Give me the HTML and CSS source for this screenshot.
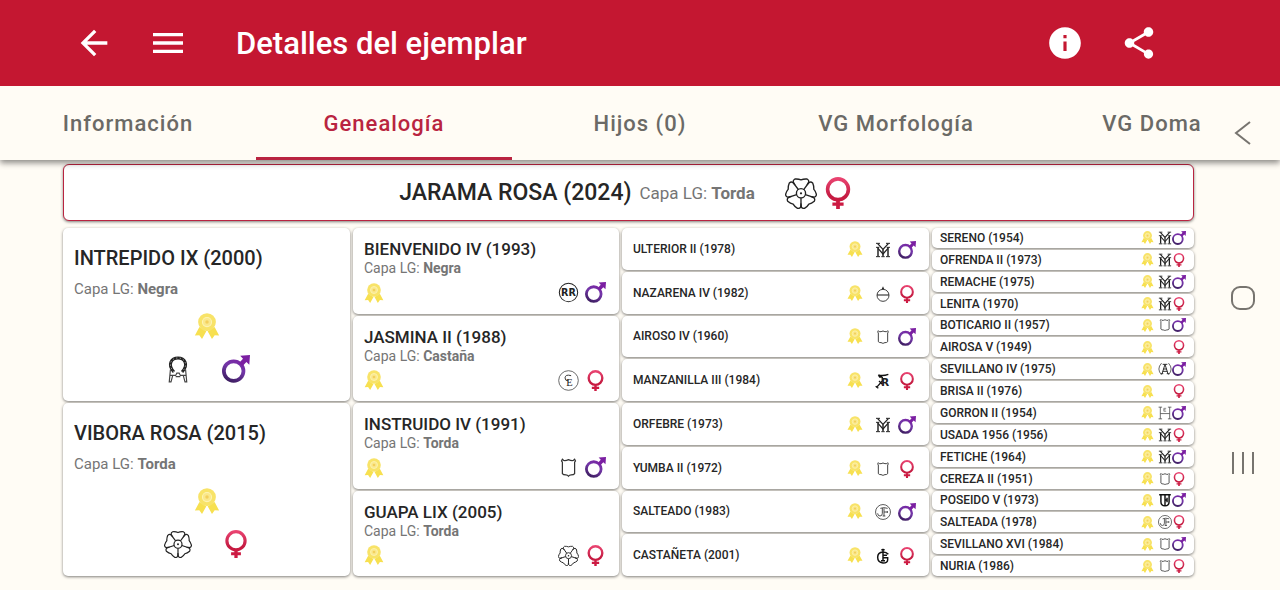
FILE: index.html
```html
<!DOCTYPE html>
<html lang="es">
<head>
  <meta charset="UTF-8">
  <meta name="viewport" content="width=device-width, initial-scale=1.0">
  <title>Detalles del ejemplar</title>
  <link rel="stylesheet" href="styles.css">
</head>
<body>

<!-- Iconos compartidos -->
<svg class="sprite" aria-hidden="true">
  <defs>
    <linearGradient id="maleFill" gradientUnits="userSpaceOnUse" x1="18" y1="1" x2="8" y2="24">
      <stop offset="0" stop-color="#7b1fa2"/>
      <stop offset="0.5" stop-color="#7336a8"/>
      <stop offset="1" stop-color="#3b1d5e"/>
    </linearGradient>
    <linearGradient id="femaleFill" gradientUnits="userSpaceOnUse" x1="12" y1="0" x2="12" y2="24">
      <stop offset="0" stop-color="#ec4674"/>
      <stop offset="0.6" stop-color="#c41c42"/>
      <stop offset="1" stop-color="#d8143c"/>
    </linearGradient>
    <path id="petal" d="M2.2 -3L4.8 -6.600L6.300 -9.200Q6.500 -10.600 4.900 -11.500Q2 -11.700 0 -10.800Q-2 -11.700 -4.900 -11.500Q-6.500 -10.600 -6.300 -9.200L-4.800 -6.600"/>
  </defs>

  <symbol id="male" viewBox="0 0 24 24">
    <circle cx="10" cy="13.8" r="8.4" fill="none" stroke="url(#maleFill)" stroke-width="3.2"/>
    <path d="M15.6 0.6L24 0l-0.6 8.4-2.5-2.3-3.4 3.6-2.9-2.9 3.4-3.6z" fill="#7b1fa2"/>
  </symbol>
  <symbol id="female" viewBox="0 0 24 24">
    <circle cx="12" cy="9.2" r="7.8" fill="none" stroke="url(#femaleFill)" stroke-width="2.7"/>
    <path d="M10.6 17.6h2.8v1.5h2.8v2.5h-2.8V24h-2.8v-2.4H7.8v-2.5h2.8z" fill="#cc1a42"/>
  </symbol>
  <symbol id="ribbon" viewBox="0 0 24 24">
    <path d="M5 13L0.8 20.8l4.1-.3L7.4 24l4-7.2zM19 13l4.2 7.8-4.1-.3-2.5 3.5-4-7.2z" fill="#f7e050"/>
    <circle cx="12" cy="8.4" r="8.2" fill="#f8e368"/>
    <circle cx="12" cy="8.4" r="4.2" fill="#fae88c" stroke="#fdf3b4" stroke-width="1"/>
    <circle cx="12" cy="8.4" r="1.6" fill="#f3cf5c"/>
  </symbol>
  <symbol id="rose" viewBox="0 0 24 24">
    <g fill="none" stroke="#222" stroke-width="1.100" transform="translate(12 12.2) scale(0.93)">
      <circle r="3.700"/>
      <use href="#petal"/>
      <use href="#petal" transform="rotate(72)"/>
      <use href="#petal" transform="rotate(144)"/>
      <use href="#petal" transform="rotate(216)"/>
      <use href="#petal" transform="rotate(288)"/>
      <circle r="0.9" fill="#222" stroke="none"/>
    </g>
  </symbol>
  <symbol id="horseshoe" viewBox="0 0 24 24">
    <path d="M8.500 14.500C2.500 8 6.500 2.500 12 2.500s9.500 5.500 3.500 12" fill="none" stroke="#222" stroke-width="2.600"/>
    <path d="M8.500 14.500C2.500 8 6.500 2.500 12 2.500s9.500 5.500 3.500 12" fill="none" stroke="#aaa" stroke-width="0.700" stroke-dasharray="1.200 1.800"/>
    <path d="M5.500 12.500L4.500 23H6l1.500-5.500M18.500 12.500l1 10.500H18l-1.500-5.500M5.500 17.500h4.500l1-2h2l1 2h4.500M10 18.500h4" fill="none" stroke="#444" stroke-width="1"/>
  </symbol>
  <symbol id="shield" viewBox="0 0 24 24">
    <path d="M5 2.500l1.500 1.500Q9 4.500 12 3q3 1.500 5.500 1L19 2.500l1 2-1 1.500v13q-1 1.500-4 1.500-2 0-3 1.500-1-1.500-3-1.500-3 0-4-1.500V6L4 4.500z" fill="none" stroke="#333" stroke-width="1.400"/>
  </symbol>
  <symbol id="brand-ym" viewBox="0 0 24 24">
    <g fill="none" stroke="#222">
      <path d="M4.500 8V21.500M19.500 8V21.500M12 11v10" stroke-width="2.200"/>
      <path d="M4.500 9.500L12 18l7.500-8.500" stroke-width="1.800"/>
      <path d="M4 2.500l8 8.500 8-8.500" stroke-width="2"/>
      <path d="M1.500 2h6M16.500 2h6M1.500 8h5M17.500 8h5M1.500 22h6M16.500 22h6M9.500 22h5" stroke-width="1.500"/>
    </g>
  </symbol>
  <symbol id="brand-orb" viewBox="0 0 24 24">
    <path d="M12 0.500l2 4.500h-4z" fill="#222"/>
    <circle cx="12" cy="14" r="9" fill="none" stroke="#333" stroke-width="1.400"/>
    <path d="M3 13.500h18" stroke="#222" stroke-width="1.600"/>
  </symbol>
  <symbol id="brand-jf" viewBox="0 0 24 24">
    <circle cx="12" cy="12" r="11.200" fill="none" stroke="#333" stroke-width="1.200"/>
    <path d="M4 14q0 4 3.500 4t3.500-4V6M8 6.500q5-2 11 0M13.500 6.500V18M13.500 12h5M18.500 10.500v3M11.500 18h4" fill="none" stroke="#333" stroke-width="1.300"/>
  </symbol>
  <symbol id="brand-cg" viewBox="0 0 24 24">
    <path d="M20 9.500Q17 6 12 6q-8 .5-8 8t8 8.500q7 0 7-5v-3h-7M12 1v18M9.500 2.500h5M12 11h6M9 19h6" fill="none" stroke="#111" stroke-width="2.200"/>
  </symbol>
  <symbol id="brand-a" viewBox="0 0 24 24">
    <path d="M6 2Q-3 12 6 22M18 2q9 10 0 20" fill="none" stroke="#333" stroke-width="1.300"/>
    <path d="M8 4h8M12 4L7 20M12 4l5 16M9 12h6M8 16h8M5 20h4M15 20h4" fill="none" stroke="#222" stroke-width="1.600"/>
  </symbol>
  <symbol id="brand-h" viewBox="0 0 24 24">
    <path d="M4 2v20M20 2v20M4 13h16M1 2h6M17 2h6M1 22h6M17 22h6" fill="none" stroke="#444" stroke-width="1.300"/>
    <path d="M14 4h-4v5h4M10 6.500h3" fill="none" stroke="#555" stroke-width="1.100"/>
  </symbol>
  <symbol id="brand-ut" viewBox="0 0 24 24">
    <path d="M2 3h20M5 3v12q0 7 7 7t7-7V3M12 3v19M15.500 8v8M12 12h4" fill="none" stroke="#111" stroke-width="2.500"/>
  </symbol>
</svg>

<header class="app-header">
  <div class="toolbar">
    <button class="icon-btn" aria-label="Volver">
      <svg viewBox="0 0 24 24"><path d="M20 11H7.830l5.590-5.590L12 4l-8 8 8 8 1.410-1.410L7.830 13H20z"/></svg>
    </button>
    <button class="icon-btn menu-btn" aria-label="Menú">
      <svg viewBox="0 0 24 24"><path d="M3 18h18v-2H3zM3 13h18v-2H3zM3 6v2h18V6z"/></svg>
    </button>
    <h1>Detalles del ejemplar</h1>
    <button class="icon-btn small" aria-label="Ayuda">
      <svg viewBox="0 0 24 24"><path d="M12 2C6.480 2 2 6.480 2 12s4.480 10 10 10 10-4.480 10-10S17.520 2 12 2zm1 15h-2v-6h2zm0-8h-2V7h2z"/></svg>
    </button>
    <button class="icon-btn small share-btn" aria-label="Compartir">
      <svg viewBox="0 0 24 24"><path d="M18 16.080c-.76 0-1.440.3-1.960.77L8.910 12.700c.05-.23.09-.46.09-.7s-.04-.47-.09-.7l7.050-4.110c.54.5 1.250.81 2.040.81 1.660 0 3-1.340 3-3s-1.340-3-3-3-3 1.340-3 3c0 .24.04.47.09.7L8.040 9.810C7.500 9.310 6.790 9 6 9c-1.660 0-3 1.340-3 3s1.340 3 3 3c.79 0 1.500-.31 2.040-.81l7.120 4.160c-.05.21-.08.43-.08.65 0 1.610 1.310 2.920 2.920 2.920s2.920-1.310 2.920-2.920-1.310-2.920-2.920-2.920z"/></svg>
    </button>
  </div>
  <nav class="tabs">
    <button class="tab">Información</button>
    <button class="tab active">Genealogía</button>
    <button class="tab">Hijos (0)</button>
    <button class="tab">VG Morfología</button>
    <button class="tab">VG Doma</button>
  </nav>
</header>

<main class="content">
  <article class="card root">
    <h2>JARAMA ROSA (2024)</h2>
    <p>Capa LG: <b>Torda</b></p>
    <div class="icons">
      <svg><use href="#rose"/></svg>
      <svg><use href="#female"/></svg>
    </div>
  </article>

  <div class="tree">
    <!-- Padres -->
    <section class="gen gen1">
      <article class="card">
        <h3>INTREPIDO IX (2000)</h3>
        <p>Capa LG: <b>Negra</b></p>
        <svg class="ribbon"><use href="#ribbon"/></svg>
        <div class="icons"><svg><use href="#horseshoe"/></svg><svg><use href="#male"/></svg></div>
      </article>
      <article class="card">
        <h3>VIBORA ROSA (2015)</h3>
        <p>Capa LG: <b>Torda</b></p>
        <svg class="ribbon"><use href="#ribbon"/></svg>
        <div class="icons"><svg><use href="#rose"/></svg><svg><use href="#female"/></svg></div>
      </article>
    </section>

    <!-- Abuelos -->
    <section class="gen gen2">
      <article class="card">
        <h3>BIENVENIDO IV (1993)</h3>
        <p>Capa LG: <b>Negra</b></p>
        <div class="icons">
          <svg class="ribbon"><use href="#ribbon"/></svg>
          <svg viewBox="0 0 24 24">
            <circle cx="12" cy="12" r="10.500" fill="none" stroke="#222" stroke-width="1.200"/>
            <text class="mark mark-bold" x="12" y="16" text-anchor="middle" font-size="11">RR</text>
          </svg>
          <svg><use href="#male"/></svg>
        </div>
      </article>
      <article class="card">
        <h3>JASMINA II (1988)</h3>
        <p>Capa LG: <b>Castaña</b></p>
        <div class="icons">
          <svg class="ribbon"><use href="#ribbon"/></svg>
          <svg viewBox="0 0 24 24">
            <circle cx="12" cy="12" r="11.200" fill="none" stroke="#444" stroke-width="0.900"/>
            <path d="M15 6.500Q8.500 4.500 8 9q0 3.500 4 3.500" fill="none" stroke="#333" stroke-width="1.100"/>
            <text class="mark" x="13" y="18" text-anchor="middle" font-size="12">E</text>
          </svg>
          <svg><use href="#female"/></svg>
        </div>
      </article>
      <article class="card">
        <h3>INSTRUIDO IV (1991)</h3>
        <p>Capa LG: <b>Torda</b></p>
        <div class="icons"><svg class="ribbon"><use href="#ribbon"/></svg><svg><use href="#shield"/></svg><svg><use href="#male"/></svg></div>
      </article>
      <article class="card">
        <h3>GUAPA LIX (2005)</h3>
        <p>Capa LG: <b>Torda</b></p>
        <div class="icons"><svg class="ribbon"><use href="#ribbon"/></svg><svg><use href="#rose"/></svg><svg><use href="#female"/></svg></div>
      </article>
    </section>

    <!-- Bisabuelos -->
    <section class="gen gen3">
      <article class="card">
        <h3>ULTERIOR II (1978)</h3>
        <svg class="ribbon"><use href="#ribbon"/></svg><svg class="brand"><use href="#brand-ym"/></svg><svg class="sex"><use href="#male"/></svg>
      </article>
      <article class="card">
        <h3>NAZARENA IV (1982)</h3>
        <svg class="ribbon"><use href="#ribbon"/></svg><svg class="brand"><use href="#brand-orb"/></svg><svg class="sex"><use href="#female"/></svg>
      </article>
      <article class="card">
        <h3>AIROSO IV (1960)</h3>
        <svg class="ribbon"><use href="#ribbon"/></svg><svg class="brand"><use href="#shield"/></svg><svg class="sex"><use href="#male"/></svg>
      </article>
      <article class="card">
        <h3>MANZANILLA III (1984)</h3>
        <svg class="ribbon"><use href="#ribbon"/></svg>
        <svg class="brand" viewBox="0 0 24 24">
          <path d="M5 3q7 2 15-1M5 3l2 3h4M11 6v6M11 12L2 22M1 20l4 3M6 12l5 5" fill="none" stroke="#111" stroke-width="2"/>
          <text class="mark mark-bold" x="15" y="19" text-anchor="middle" font-size="16">R</text>
        </svg>
        <svg class="sex"><use href="#female"/></svg>
      </article>
      <article class="card">
        <h3>ORFEBRE (1973)</h3>
        <svg class="ribbon"><use href="#ribbon"/></svg><svg class="brand"><use href="#brand-ym"/></svg><svg class="sex"><use href="#male"/></svg>
      </article>
      <article class="card">
        <h3>YUMBA II (1972)</h3>
        <svg class="ribbon"><use href="#ribbon"/></svg><svg class="brand"><use href="#shield"/></svg><svg class="sex"><use href="#female"/></svg>
      </article>
      <article class="card">
        <h3>SALTEADO (1983)</h3>
        <svg class="ribbon"><use href="#ribbon"/></svg><svg class="brand"><use href="#brand-jf"/></svg><svg class="sex"><use href="#male"/></svg>
      </article>
      <article class="card">
        <h3>CASTAÑETA (2001)</h3>
        <svg class="ribbon"><use href="#ribbon"/></svg><svg class="brand"><use href="#brand-cg"/></svg><svg class="sex"><use href="#female"/></svg>
      </article>
    </section>

    <!-- Tatarabuelos -->
    <section class="gen gen4">
      <article class="card">
        <h3>SERENO (1954)</h3>
        <svg class="ribbon"><use href="#ribbon"/></svg><svg class="brand"><use href="#brand-ym"/></svg><svg class="sex"><use href="#male"/></svg>
      </article>
      <article class="card">
        <h3>OFRENDA II (1973)</h3>
        <svg class="ribbon"><use href="#ribbon"/></svg><svg class="brand"><use href="#brand-ym"/></svg><svg class="sex"><use href="#female"/></svg>
      </article>
      <article class="card">
        <h3>REMACHE (1975)</h3>
        <svg class="ribbon"><use href="#ribbon"/></svg><svg class="brand"><use href="#brand-ym"/></svg><svg class="sex"><use href="#male"/></svg>
      </article>
      <article class="card">
        <h3>LENITA (1970)</h3>
        <svg class="ribbon"><use href="#ribbon"/></svg><svg class="brand"><use href="#brand-ym"/></svg><svg class="sex"><use href="#female"/></svg>
      </article>
      <article class="card">
        <h3>BOTICARIO II (1957)</h3>
        <svg class="ribbon"><use href="#ribbon"/></svg><svg class="brand"><use href="#shield"/></svg><svg class="sex"><use href="#male"/></svg>
      </article>
      <article class="card">
        <h3>AIROSA V (1949)</h3>
        <svg class="ribbon"><use href="#ribbon"/></svg><svg class="brand"></svg><svg class="sex"><use href="#female"/></svg>
      </article>
      <article class="card">
        <h3>SEVILLANO IV (1975)</h3>
        <svg class="ribbon"><use href="#ribbon"/></svg><svg class="brand"><use href="#brand-a"/></svg><svg class="sex"><use href="#male"/></svg>
      </article>
      <article class="card">
        <h3>BRISA II (1976)</h3>
        <svg class="ribbon"><use href="#ribbon"/></svg><svg class="brand"></svg><svg class="sex"><use href="#female"/></svg>
      </article>
      <article class="card">
        <h3>GORRON II (1954)</h3>
        <svg class="ribbon"><use href="#ribbon"/></svg><svg class="brand"><use href="#brand-h"/></svg><svg class="sex"><use href="#male"/></svg>
      </article>
      <article class="card">
        <h3>USADA 1956 (1956)</h3>
        <svg class="ribbon"><use href="#ribbon"/></svg><svg class="brand"><use href="#brand-ym"/></svg><svg class="sex"><use href="#female"/></svg>
      </article>
      <article class="card">
        <h3>FETICHE (1964)</h3>
        <svg class="ribbon"><use href="#ribbon"/></svg><svg class="brand"><use href="#brand-ym"/></svg><svg class="sex"><use href="#male"/></svg>
      </article>
      <article class="card">
        <h3>CEREZA II (1951)</h3>
        <svg class="ribbon"><use href="#ribbon"/></svg><svg class="brand"><use href="#shield"/></svg><svg class="sex"><use href="#female"/></svg>
      </article>
      <article class="card">
        <h3>POSEIDO V (1973)</h3>
        <svg class="ribbon"><use href="#ribbon"/></svg><svg class="brand"><use href="#brand-ut"/></svg><svg class="sex"><use href="#male"/></svg>
      </article>
      <article class="card">
        <h3>SALTEADA (1978)</h3>
        <svg class="ribbon"><use href="#ribbon"/></svg><svg class="brand"><use href="#brand-jf"/></svg><svg class="sex"><use href="#female"/></svg>
      </article>
      <article class="card">
        <h3>SEVILLANO XVI (1984)</h3>
        <svg class="ribbon"><use href="#ribbon"/></svg><svg class="brand"><use href="#shield"/></svg><svg class="sex"><use href="#male"/></svg>
      </article>
      <article class="card">
        <h3>NURIA (1986)</h3>
        <svg class="ribbon"><use href="#ribbon"/></svg><svg class="brand"><use href="#shield"/></svg><svg class="sex"><use href="#female"/></svg>
      </article>
    </section>
  </div>
</main>

<!-- Barra de navegación del sistema -->
<div class="system-nav">
  <button aria-label="Atrás"><svg viewBox="0 0 28 28"><path d="M21 3L7 14l14 11"/></svg></button>
  <button aria-label="Inicio"><svg viewBox="0 0 28 28"><rect x="3" y="3" width="22" height="22" rx="8"/></svg></button>
  <button aria-label="Recientes"><svg viewBox="0 0 28 28"><path d="M4 3v22M14 3v22M24 3v22"/></svg></button>
</div>

</body>
</html>
```
FILE: styles.css
```css
* {
  box-sizing: border-box;
}

body {
  font-family: Roboto, "Liberation Sans", sans-serif;
  background: #fffcf5;
  color: #262626;
  margin: 0;
  min-height: 100vh;
  display: flex;
  flex-direction: column;
}

h1, h2, h3, p {
  margin: 0;
}

button {
  font-family: inherit;
  background: none;
  border: none;
  padding: 0;
  cursor: pointer;
}

svg {
  display: block;
  flex-shrink: 0;
}

.sprite {
  position: absolute;
  width: 0;
  height: 0;
}

.mark {
  font-family: "Liberation Serif", serif;
  fill: #222;
}

.mark-bold {
  font-family: "DejaVu Sans", sans-serif;
  font-weight: bold;
}

/* header */
.app-header {
  position: relative;
  z-index: 1;
  background: #fffcf5;
  box-shadow: 0 3px 6px rgba(0, 0, 0, 0.45);
}

.toolbar {
  display: flex;
  align-items: center;
  height: 86px;
  padding: 0 122px 0 74px;
  background: #c41731;
}

.toolbar h1 {
  flex: 1;
  margin-left: 48px;
  color: #fff;
  font-size: 31px;
  font-weight: 500;
}

.icon-btn svg {
  width: 40px;
  height: 40px;
  fill: #fff;
}

.icon-btn.small svg {
  width: 38px;
  height: 38px;
}

.menu-btn {
  margin-left: 34px;
}

.share-btn {
  margin-left: 36px;
}

.tabs {
  display: flex;
}

.tab {
  flex: 1;
  height: 74px;
  color: #6b6a66;
  font-size: 22px;
  font-weight: 500;
  letter-spacing: 1px;
}

.tab.active {
  color: #b92440;
  box-shadow: inset 0 -3px #b92440;
}

/* cards */
.content {
  flex: 1;
  display: flex;
  flex-direction: column;
  gap: 7px;
  padding: 4px 86px 14px 63px;
}

.card {
  background: #fff;
  border-radius: 5px;
  box-shadow: 0 1px 3px rgba(0, 0, 0, 0.5);
}

.card h2, .card h3 {
  font-weight: 500;
  white-space: nowrap;
}

.card p {
  color: #757575;
}

.root {
  display: flex;
  align-items: center;
  justify-content: center;
  height: 57px;
  padding-right: 4px;
  border: 1px solid #b92440;
  border-radius: 6px;
}

.root h2 {
  font-size: 23px;
}

.root p {
  margin-left: 8px;
  font-size: 17px;
}

.root .icons {
  display: flex;
  gap: 5px;
  margin-left: 30px;
}

.root .icons svg {
  width: 32px;
  height: 32px;
}

.tree {
  flex: 1;
  display: grid;
  grid-template-columns: 287fr 266fr 307fr 262fr;
  gap: 3px;
}

.gen {
  display: flex;
  flex-direction: column;
  gap: 2px;
}

.gen .card {
  flex: 1;
}

.gen1 .card {
  padding: 18px 11px 0;
}

.gen1 h3 {
  font-size: 20px;
  line-height: 24px;
}

.gen1 p {
  margin-top: 9px;
  font-size: 15px;
  line-height: 20px;
}

.gen1 .ribbon {
  width: 26px;
  height: 26px;
  margin: 14px auto 0;
}

.gen1 .icons {
  display: flex;
  justify-content: center;
  gap: 30px;
  margin-top: 16px;
}

.gen1 .icons svg {
  width: 28px;
  height: 28px;
}

.gen2 .card {
  padding: 11px 13px 0 11px;
}

.gen2 h3 {
  font-size: 17px;
  line-height: 20px;
}

.gen2 p {
  font-size: 14px;
  line-height: 18px;
}

.gen2 .icons {
  display: flex;
  align-items: center;
  gap: 6px;
  margin-top: 5px;
}

.gen2 .icons svg {
  width: 21px;
  height: 21px;
}

.gen2 .icons .ribbon {
  width: 20px;
  height: 20px;
  margin-right: auto;
}

.gen3 .card {
  display: flex;
  align-items: center;
  padding: 0 13px 0 11px;
}

.gen3 h3 {
  flex: 1;
  font-size: 12px;
}

.gen3 .ribbon, .gen3 .brand {
  width: 16px;
  height: 16px;
}

.gen3 .brand {
  margin: 2px 7px 0 12px;
}

.gen3 .sex {
  width: 18px;
  height: 18px;
  margin-top: 2px;
}

.gen4 .card {
  display: flex;
  align-items: center;
  padding: 0 8px;
}

.gen4 h3 {
  flex: 1;
  font-size: 12px;
  line-height: 16px;
}

.gen4 .ribbon {
  width: 13px;
  height: 13px;
}

.gen4 .brand {
  width: 14px;
  height: 14px;
  margin: 0 0 0 4px;
}

.gen4 .sex {
  width: 14px;
  height: 14px;
}

/* system buttons over the right edge */
.system-nav {
  position: fixed;
  z-index: 2;
  top: 50px;
  right: 0;
  bottom: 45px;
  width: 74px;
  display: flex;
  flex-direction: column;
  align-items: center;
  justify-content: space-around;
}

.system-nav svg {
  width: 28px;
  height: 28px;
  fill: none;
  stroke: #77746f;
  stroke-width: 2;
}
```
